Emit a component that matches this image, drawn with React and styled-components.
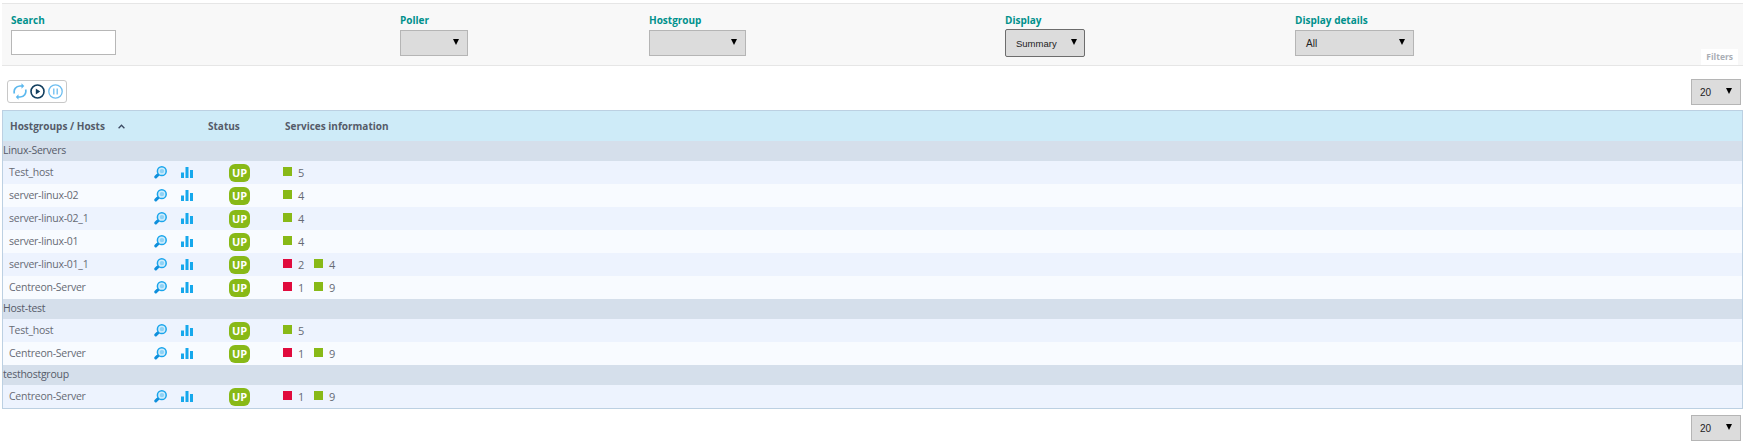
import React from "react";
import styled, { createGlobalStyle } from "styled-components";

const Global = createGlobalStyle`
  html, body { margin: 0; padding: 0; background: #fff; }
  body { font-family: "Open Sans", "Liberation Sans", sans-serif; }
`;
const Page = styled.div`
  padding: 3px 6px 0 2px;
  width: 1741px;
  height: 440px;
  box-sizing: content-box;
  overflow: hidden;
`;
const FilterBar = styled.div`
  display: grid;
  grid-template-columns: 389px 249px 356px 290px 1fr auto;
  height: 63px;
  box-sizing: border-box;
  padding: 0 5px 0 9px;
  background: #f8f8f8;
  border-top: 1px solid #e6e6e6;
  border-bottom: 1px solid #e6e6e6;
`;
const Field = styled.div`
  display: flex;
  flex-direction: column;
  align-items: flex-start;
  padding-top: 9px;
`;
const Label = styled.label`
  font-size: 10px;
  font-weight: 700;
  line-height: 15px;
  color: #00918c;
  margin-bottom: 2px;
`;
const SearchInput = styled.input`
  width: 105px;
  height: 25px;
  box-sizing: border-box;
  margin: 0;
  background: #fff;
  border: 1px solid #b7b7b7;
`;
const Select = styled.div`
  display: flex;
  align-items: center;
  flex: none;
  width: ${(p) => p.$w}px;
  height: ${(p) => (p.$focus ? 28 : 26)}px;
  box-sizing: border-box;
  padding: 0 ${(p) => (p.$focus ? 7 : 8)}px 0 ${(p) => p.$pad ?? 10}px;
  margin-top: ${(p) => (p.$focus || p.$raised ? -1 : 0)}px;
  background: #dcdcdc;
  border: ${(p) => (p.$focus ? "1.5px solid #6d6d6d" : "1px solid #b5b5b5")};
  border-radius: ${(p) => (p.$focus ? 2 : 0)}px;
  font-family: "Liberation Sans", Arial, sans-serif;
  font-size: ${(p) => (p.$focus ? 9.5 : 10)}px;
  color: #222;
  &::after {
    content: "";
    margin-left: auto;
    margin-top: -3px;
    border-left: 3.5px solid transparent;
    border-right: 3.5px solid transparent;
    border-top: 6px solid #000;
  }
`;
const FiltersTab = styled.div`
  align-self: end;
  background: #fff;
  color: #a9aeb5;
  font-size: 8.5px;
  font-weight: 700;
  line-height: 16px;
  padding: 0 5px;
`;
const ToolRow = styled.div`
  display: flex;
  align-items: flex-start;
  justify-content: space-between;
  height: 44px;
  padding: 14px 2px 0 5px;
  box-sizing: border-box;
`;
const Toolbar = styled.div`
  display: flex;
  align-items: center;
  gap: 3px;
  height: 23px;
  width: 60px;
  box-sizing: border-box;
  padding-left: 5px;
  background: #fff;
  border: 1px solid #c8c8c8;
  border-radius: 3px;
`;
const PageSelectRow = styled.div`
  display: flex;
  justify-content: flex-end;
  padding: 6px 2px 0 0;
`;
const Table = styled.div`
  border: 1px solid #bcd0e2;
`;
const HeaderRow = styled.div`
  display: grid;
  grid-template-columns: 205px 77px 1fr;
  height: 30px;
  align-items: center;
  background: #ceebf8;
  font-size: 10px;
  font-weight: 700;
  color: #555b69;
`;
const HeadCell = styled.div`
  display: flex;
  align-items: center;
  gap: 13px;
  padding-left: ${(p) => p.$pad ?? 0}px;
`;
const GroupRow = styled.div`
  height: 20px;
  line-height: 19px;
  background: #d5dfeb;
  font-size: 10.5px;
  letter-spacing: -0.25px;
  color: #555b69;
`;
const HostRow = styled.div`
  display: grid;
  grid-template-columns: 151px 27px 48px 54px 1fr;
  height: 23px;
  align-items: center;
  background: ${(p) => (p.$odd ? "#f8fbff" : "#edf3fe")};
  font-size: 10.5px;
  letter-spacing: -0.25px;
  color: #666a74;
`;
const HostName = styled.div`
  padding: 0 0 1px 6px;
`;
const Badge = styled.div`
  width: 21px;
  height: 18px;
  margin-top: 1px;
  border-radius: 6px;
  background: #88b917;
  color: #fff;
  font-size: 11px;
  font-weight: 700;
  letter-spacing: 0;
  line-height: 18px;
  text-align: center;
`;
const Counts = styled.div`
  display: flex;
  align-items: center;
`;
const Square = styled.span`
  width: 9px;
  height: 9px;
  margin-right: 6px;
  margin-top: -2px;
  background: ${(p) => p.$c};
`;
const Count = styled.span`
  width: 16px;
  line-height: 16px;
  font-size: 11px;
`;

const Refresh = () => (
  <svg width="14" height="17" viewBox="0 0 14 17" fill="none" stroke="#5bb8ee" strokeWidth="1.7">
    <path d="M1.4 10.5A5.8 5.8 0 0 1 7 3h2.2" />
    <path d="M12.6 6.5A5.8 5.8 0 0 1 7 14H4.8" />
    <path d="M8.5 .3 11.3 3 8.5 5.8Z" fill="#5bb8ee" stroke="none" />
    <path d="M5.5 11.2 2.8 14 5.5 16.7Z" fill="#5bb8ee" stroke="none" />
  </svg>
);
const Play = () => (
  <svg width="15" height="15" viewBox="0 0 15 15">
    <circle cx="7.5" cy="7.5" r="6.5" fill="none" stroke="#123f5f" strokeWidth="1.6" />
    <path d="M5.8 4.6 10.2 7.5 5.8 10.4Z" fill="#123f5f" />
  </svg>
);
const Pause = () => (
  <svg width="15" height="15" viewBox="0 0 15 15" fill="none" stroke="#6cbdf0">
    <circle cx="7.5" cy="7.5" r="6.7" strokeWidth="1.3" />
    <path d="M5.8 4.4v6.2M9.2 4.4v6.2" strokeWidth="1.3" />
  </svg>
);
const Chevron = () => (
  <svg width="7" height="5" viewBox="0 0 7 5" fill="none" stroke="#3c4a63" strokeWidth="1.3">
    <path d="M.6 4.2 3.5 1.2 6.4 4.2" />
  </svg>
);
const Magnifier = () => (
  <svg width="13" height="13" viewBox="0 0 13 13">
    <circle cx="7.8" cy="5.2" r="4.4" fill="#cfecfb" stroke="#1aa5ec" strokeWidth="1.5" />
    <circle cx="7.9" cy="5.1" r="2.2" fill="#8ed2f6" />
    <path d="M3.6 9.2 1.8 10.9" stroke="#0f8fdc" strokeWidth="3" strokeLinecap="round" />
  </svg>
);
const Bars = () => (
  <svg width="12" height="11" viewBox="0 0 12 11" fill="#16a8ec">
    <rect x="0" y="5.5" width="3" height="5.5" />
    <rect x="4.5" y="0" width="3" height="11" />
    <rect x="9" y="3" width="3" height="8" />
  </svg>
);

const RED = "#e00b3d";
const GREEN = "#88b917";
const groups = [
  {
    name: "Linux-Servers",
    hosts: [
      ["Test_host", null, 5],
      ["server-linux-02", null, 4],
      ["server-linux-02_1", null, 4],
      ["server-linux-01", null, 4],
      ["server-linux-01_1", 2, 4],
      ["Centreon-Server", 1, 9],
    ],
  },
  { name: "Host-test", hosts: [["Test_host", null, 5], ["Centreon-Server", 1, 9]] },
  { name: "testhostgroup", hosts: [["Centreon-Server", 1, 9]] },
];

export default function App() {
  return (
    <Page>
      <Global />
      <FilterBar>
        <Field>
          <Label>Search</Label>
          <SearchInput />
        </Field>
        <Field>
          <Label>Poller</Label>
          <Select $w={68} />
        </Field>
        <Field>
          <Label>Hostgroup</Label>
          <Select $w={97} />
        </Field>
        <Field>
          <Label>Display</Label>
          <Select $w={80} $focus>Summary</Select>
        </Field>
        <Field>
          <Label>Display details</Label>
          <Select $w={119}>All</Select>
        </Field>
        <FiltersTab>Filters</FiltersTab>
      </FilterBar>
      <ToolRow>
        <Toolbar>
          <Refresh />
          <Play />
          <Pause />
        </Toolbar>
        <Select $w={50} $pad={8} $raised>20</Select>
      </ToolRow>
      <Table>
        <HeaderRow>
          <HeadCell $pad={7}>
            Hostgroups / Hosts <Chevron />
          </HeadCell>
          <HeadCell>Status</HeadCell>
          <HeadCell>Services information</HeadCell>
        </HeaderRow>
        {groups.map((g) => (
          <React.Fragment key={g.name}>
            <GroupRow>{g.name}</GroupRow>
            {g.hosts.map(([n, crit, ok], i) => (
              <HostRow key={n} $odd={i % 2 === 1}>
                <HostName>{n}</HostName>
                <Magnifier />
                <Bars />
                <Badge>UP</Badge>
                <Counts>
                  {crit != null && (
                    <>
                      <Square $c={RED} />
                      <Count>{crit}</Count>
                    </>
                  )}
                  <Square $c={GREEN} />
                  <Count>{ok}</Count>
                </Counts>
              </HostRow>
            ))}
          </React.Fragment>
        ))}
      </Table>
      <PageSelectRow>
        <Select $w={50} $pad={8}>20</Select>
      </PageSelectRow>
    </Page>
  );
}
